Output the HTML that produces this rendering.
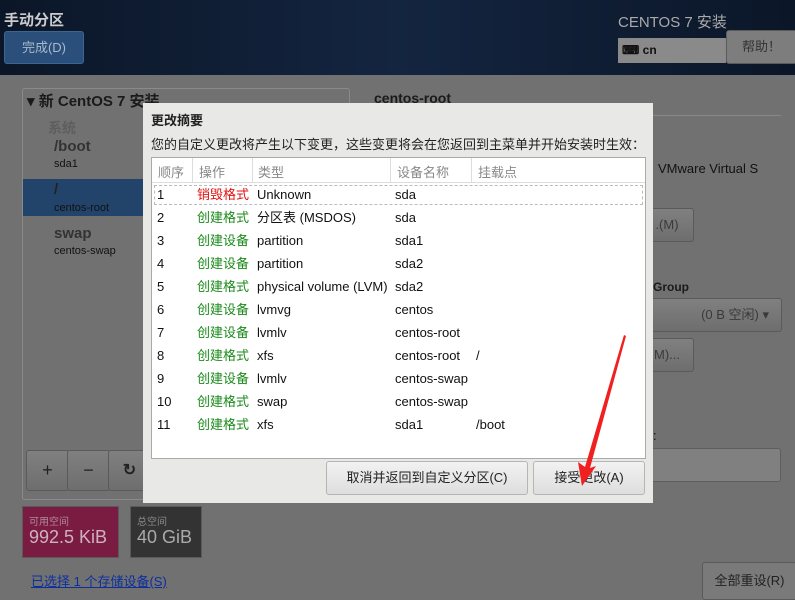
<!DOCTYPE html>
<html><head><meta charset="utf-8"><style>
body{margin:0;width:795px;height:598px;overflow:hidden;background:#717171;font-family:"Liberation Sans","Noto Sans CJK SC",sans-serif;position:relative}
.a{position:absolute;white-space:nowrap}
.hdr{left:0;top:0;width:795px;height:75px;background:linear-gradient(90deg,#0b1628,#142540 50%,#0b1628)}
.btn{border:1px solid #5a5a5a;border-radius:3px;background:linear-gradient(#808080,#6e6e6e);color:#3a3a3a;font-size:13px;text-align:center}
.rows span{position:absolute;white-space:nowrap}
</style></head><body>
<div class="a hdr"></div>
<div class="a" style="left:4px;top:9px;color:#ccc;font-size:15px;font-weight:bold">手动分区</div>
<div class="a" style="left:4px;top:31px;width:78px;height:31px;background:#2a4f7a;border:1px solid #3c6594;border-radius:3px;color:#a9b9cc;font-size:13px;text-align:center;line-height:31px">完成(D)</div>
<div class="a" style="left:618px;top:11px;color:#aaa;font-size:15px">CENTOS 7 安装</div>
<div class="a" style="left:618px;top:38px;width:108px;height:25px;background:#8a8a8a"></div>
<div class="a" style="left:622px;top:43px;font-size:12px;font-weight:bold;color:#111">⌨ cn</div>
<div class="a btn" style="left:726px;top:30px;width:69px;height:32px;line-height:32px;background:#7d7d7d;color:#333">帮助！</div>

<div class="a" style="left:22px;top:88px;width:326px;height:410px;border:1px solid #8a8a8a;border-radius:3px"></div>
<div class="a" style="left:27px;top:90px;font-size:15px;font-weight:bold;color:#1a1a1a">▾ 新 CentOS 7 安装</div>
<div class="a" style="left:48px;top:118px;font-size:14px;font-weight:bold;color:#5e5e5e">系统</div>
<div class="a" style="left:54px;top:138px;font-size:15px;font-weight:bold;color:#333">/boot</div>
<div class="a" style="left:54px;top:158px;font-size:11px;color:#111">sda1</div>
<div class="a" style="left:23px;top:179px;width:125px;height:37px;background:#22446a"></div>
<div class="a" style="left:54px;top:181px;font-size:15px;font-weight:bold;color:#222">/</div>
<div class="a" style="left:54px;top:202px;font-size:11px;color:#111">centos-root</div>
<div class="a" style="left:54px;top:225px;font-size:15px;font-weight:bold;color:#333">swap</div>
<div class="a" style="left:54px;top:245px;font-size:11px;color:#111">centos-swap</div>
<div class="a btn" style="left:26px;top:450px;width:41px;height:39px;line-height:39px;font-size:18px;color:#222">+</div>
<div class="a btn" style="left:67px;top:450px;width:41px;height:39px;line-height:39px;font-size:18px;color:#222">−</div>
<div class="a btn" style="left:108px;top:450px;width:41px;height:39px;line-height:39px;font-size:16px;color:#222;font-weight:bold">↻</div>

<div class="a" style="left:374px;top:90px;font-size:14px;font-weight:bold;color:#1a1a1a">centos-root</div>
<div class="a" style="left:653px;top:115px;width:128px;height:1px;background:#888"></div>
<div class="a" style="left:658px;top:161px;font-size:13px;color:#111">VMware Virtual S</div>
<div class="a btn" style="left:640px;top:208px;width:52px;height:32px;line-height:32px">.(M)</div>
<div class="a" style="left:653px;top:280px;font-size:12px;font-weight:bold;color:#1a1a1a">Group</div>
<div class="a btn" style="left:640px;top:298px;width:140px;height:32px;line-height:32px;text-align:right"><span style="padding-right:12px">(0 B 空闲) ▾</span></div>
<div class="a btn" style="left:640px;top:338px;width:52px;height:32px;line-height:32px">M)...</div>
<div class="a" style="left:653px;top:428px;font-size:13px;color:#111">:</div>
<div class="a" style="left:640px;top:448px;width:139px;height:32px;background:#808080;border:1px solid #5e5e5e;border-radius:3px"></div>

<div class="a" style="left:22px;top:506px;width:95px;height:50px;background:#7a1b42;border:1px solid #5a5a5a"></div>
<div class="a" style="left:29px;top:513px;font-size:10px;color:#b08a9a">可用空间</div>
<div class="a" style="left:29px;top:527px;font-size:18px;color:#d0b0c0">992.5 KiB</div>
<div class="a" style="left:130px;top:506px;width:70px;height:50px;background:#333;border:1px solid #5a5a5a"></div>
<div class="a" style="left:137px;top:513px;font-size:10px;color:#888">总空间</div>
<div class="a" style="left:137px;top:527px;font-size:18px;color:#aaa">40 GiB</div>
<div class="a" style="left:31px;top:571px;font-size:13px;color:#0c2fa0;text-decoration:underline">已选择 1 个存储设备(S)</div>
<div class="a btn" style="left:702px;top:562px;width:93px;height:36px;line-height:36px;color:#222;background:#7a7a7a">全部重设(R)</div>

<div class="a" style="left:143px;top:103px;width:510px;height:400px;background:#e8e8e6"></div>
<div class="a" style="left:151px;top:110px;font-size:13px;font-weight:bold;color:#222">更改摘要</div>
<div class="a" style="left:151px;top:134px;font-size:13px;color:#222">您的自定义更改将产生以下变更，这些变更将会在您返回到主菜单并开始安装时生效：</div>
<div class="a" style="left:151px;top:157px;width:493px;height:300px;background:#fff;border:1px solid #aaa"></div>
<div class="a rows" style="left:152px;top:158px;width:493px;height:24px;border-bottom:1px solid #ddd;font-size:13px;color:#888">
<span style="left:6px;top:4px">顺序</span><span style="left:47px;top:4px">操作</span><span style="left:106px;top:4px">类型</span><span style="left:245px;top:4px">设备名称</span><span style="left:326px;top:4px">挂载点</span>
<span style="left:40px;top:0;width:1px;height:24px;background:#ddd"></span><span style="left:100px;top:0;width:1px;height:24px;background:#ddd"></span><span style="left:238px;top:0;width:1px;height:24px;background:#ddd"></span><span style="left:319px;top:0;width:1px;height:24px;background:#ddd"></span>
</div>
<div class="a" style="left:154px;top:185px;width:487px;height:18px;border:1px dashed #bbb"></div>
<div class="a rows" style="left:157px;top:183px;width:480px;font-size:13px;color:#111;line-height:23px">
<div style="position:relative;height:23px"><span style="left:0">1</span><span style="left:40px;color:#e01010">销毁格式</span><span style="left:100px">Unknown</span><span style="left:238px">sda</span></div>
<div style="position:relative;height:23px"><span style="left:0">2</span><span style="left:40px;color:#1a8a1a">创建格式</span><span style="left:100px">分区表 (MSDOS)</span><span style="left:238px">sda</span></div>
<div style="position:relative;height:23px"><span style="left:0">3</span><span style="left:40px;color:#1a8a1a">创建设备</span><span style="left:100px">partition</span><span style="left:238px">sda1</span></div>
<div style="position:relative;height:23px"><span style="left:0">4</span><span style="left:40px;color:#1a8a1a">创建设备</span><span style="left:100px">partition</span><span style="left:238px">sda2</span></div>
<div style="position:relative;height:23px"><span style="left:0">5</span><span style="left:40px;color:#1a8a1a">创建格式</span><span style="left:100px">physical volume (LVM)</span><span style="left:238px">sda2</span></div>
<div style="position:relative;height:23px"><span style="left:0">6</span><span style="left:40px;color:#1a8a1a">创建设备</span><span style="left:100px">lvmvg</span><span style="left:238px">centos</span></div>
<div style="position:relative;height:23px"><span style="left:0">7</span><span style="left:40px;color:#1a8a1a">创建设备</span><span style="left:100px">lvmlv</span><span style="left:238px">centos-root</span></div>
<div style="position:relative;height:23px"><span style="left:0">8</span><span style="left:40px;color:#1a8a1a">创建格式</span><span style="left:100px">xfs</span><span style="left:238px">centos-root</span><span style="left:319px">/</span></div>
<div style="position:relative;height:23px"><span style="left:0">9</span><span style="left:40px;color:#1a8a1a">创建设备</span><span style="left:100px">lvmlv</span><span style="left:238px">centos-swap</span></div>
<div style="position:relative;height:23px"><span style="left:0">10</span><span style="left:40px;color:#1a8a1a">创建格式</span><span style="left:100px">swap</span><span style="left:238px">centos-swap</span></div>
<div style="position:relative;height:23px"><span style="left:0">11</span><span style="left:40px;color:#1a8a1a">创建格式</span><span style="left:100px">xfs</span><span style="left:238px">sda1</span><span style="left:319px">/boot</span></div>
</div>
<div class="a" style="left:326px;top:461px;width:200px;height:32px;border:1px solid #b5b5b5;border-radius:3px;background:linear-gradient(#f2f2f2,#dedede);font-size:13px;color:#222;text-align:center;line-height:32px">取消并返回到自定义分区(C)</div>
<div class="a" style="left:533px;top:461px;width:110px;height:32px;border:1px solid #b5b5b5;border-radius:3px;background:linear-gradient(#f2f2f2,#dedede);font-size:13px;color:#222;text-align:center;line-height:32px">接受更改(A)</div>
<svg class="a" style="left:0;top:0" width="795" height="598"><polygon points="624,335 626,336 590,468 596,466 582,486 578,462 585,467" fill="#f02020"/></svg>
</body></html>
